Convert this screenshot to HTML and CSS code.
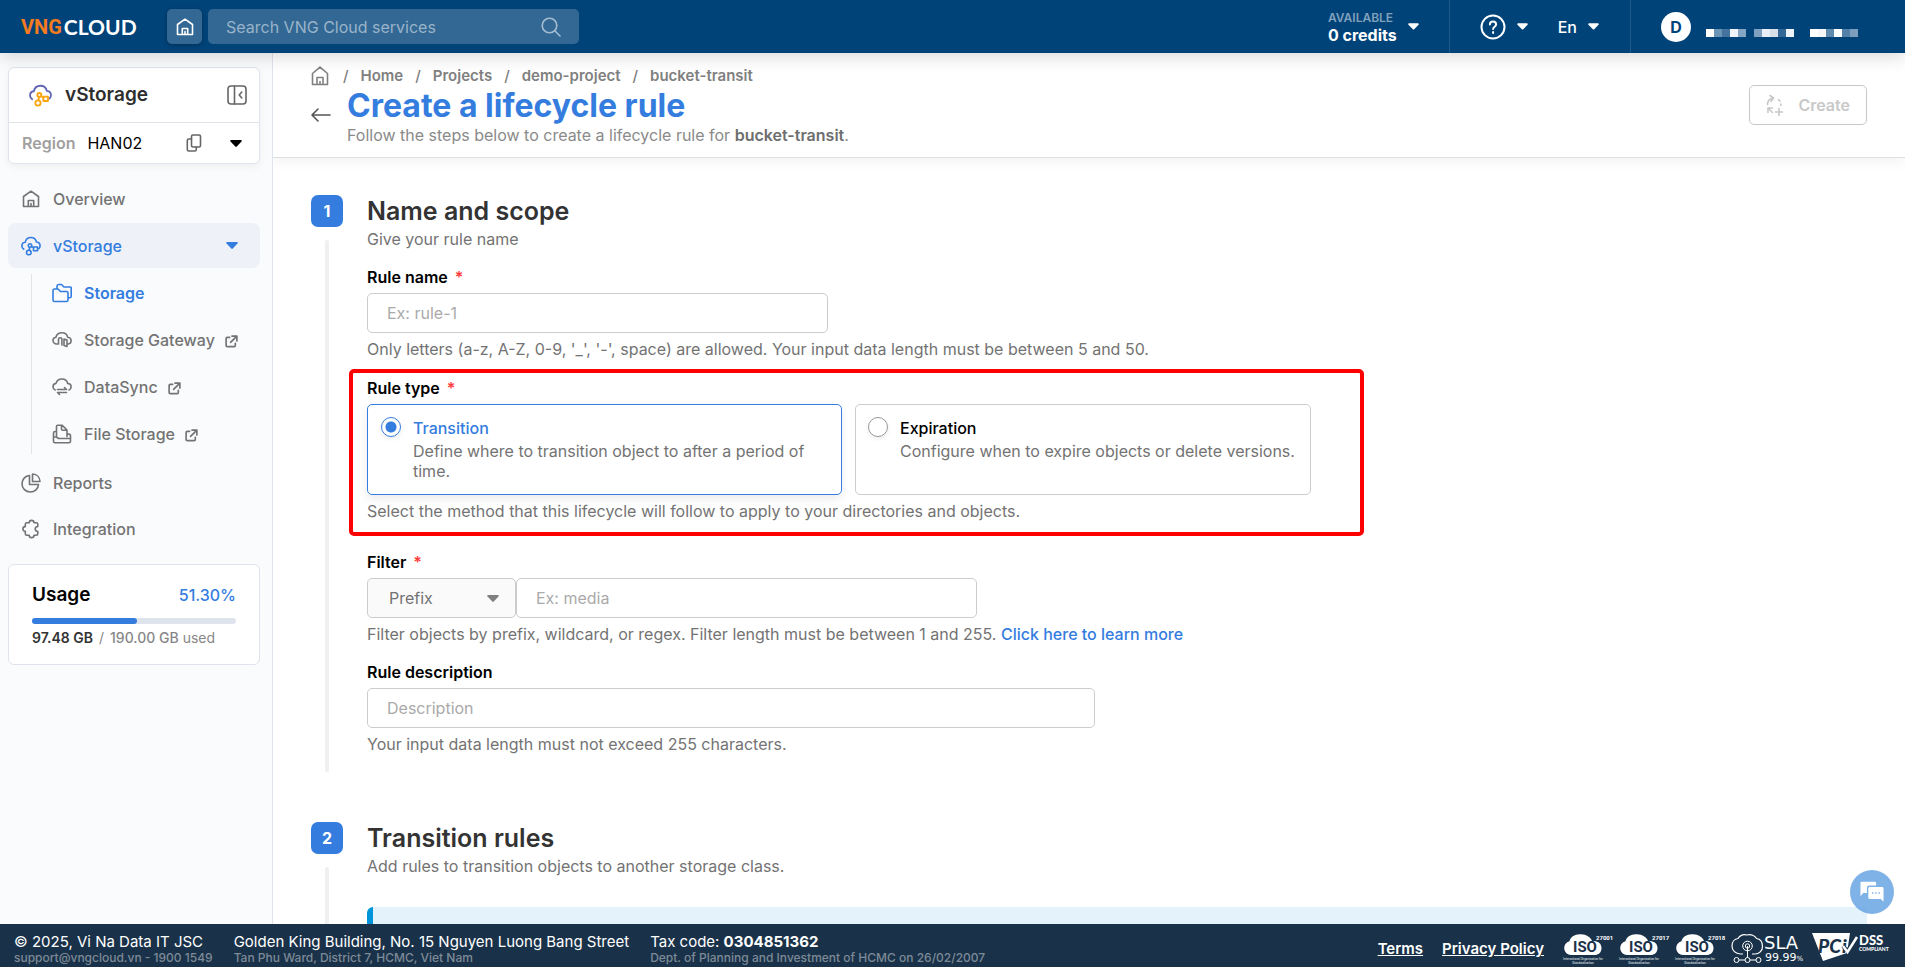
FILE: index.html
```html
<!DOCTYPE html>
<html lang="en">
<head>
<meta charset="utf-8">
<meta name="viewport" content="width=device-width, initial-scale=1">
<title>Create a lifecycle rule - vStorage</title>
<link rel="stylesheet" href="styles.css">
</head>
<body>
<svg class="defs" width="0" height="0" aria-hidden="true">
  <symbol id="i-home" viewBox="0 0 18 18"><path d="M1.500 16.500V6.500L9 1.200l7.500 5.300v10H1.500zM6.300 16.500v-6h5.400v6M9 16.500v-3"/></symbol>
  <symbol id="i-caret" viewBox="0 0 12 7"><path d="M1.200 0h9.600c.9 0 1.300 1 .7 1.600L6.800 6.600c-.4.4-1.100.4-1.500 0L.5 1.600C-.1 1 .3 0 1.200 0z"/></symbol>
  <symbol id="i-cloud" viewBox="0 0 20 20"><path d="M2.800 13.200C1.500 12.400.9 11.300.9 10c0-2 1.400-3.500 3.300-3.700C4.800 3.500 7 1.500 9.900 1.500c2.800 0 5 1.900 5.600 4.500 2.100.2 3.600 1.800 3.600 3.800 0 1.200-.5 2.200-1.300 2.900"/></symbol>
  <symbol id="i-nodes" viewBox="0 0 20 20"><circle cx="9" cy="9.500" r="1.700"/><circle cx="7.800" cy="16.500" r="2.300"/><rect x="12.500" y="11" width="4" height="3.800"/><path d="M8.700 11.500l-.4 2.500M10.600 10.600l1.900 1"/></symbol>
  <symbol id="i-ext" viewBox="0 0 14 14"><path d="M5 2.500H2.500c-.8 0-1.300.5-1.300 1.300v7.400c0 .8.500 1.300 1.300 1.300h7.300c.8 0 1.300-.5 1.300-1.300V9M7.500 1.200h5.300v5.300M12.500 1.500L6 8"/></symbol>
</svg>

<header class="topbar">
  <a class="logo" href="#"><span class="logo-vng">VNG</span><span>CLOUD</span></a>
  <button class="home-btn" type="button" aria-label="Home"><svg class="ico" width="18" height="18"><use href="#i-home"/></svg></button>
  <div class="search">
    <input type="search" placeholder="Search VNG Cloud services" aria-label="Search VNG Cloud services">
    <svg class="ico" width="20" height="20" viewBox="0 0 20 20"><circle cx="8.500" cy="8.500" r="7.300"/><path d="M13.800 13.800L19 19"/></svg>
  </div>
  <div class="top-right">
    <button class="credits" type="button">
      <span class="credits-text"><small>AVAILABLE</small><b>0 credits</b></span>
      <svg class="caret" width="11" height="7"><use href="#i-caret"/></svg>
    </button>
    <div class="lang-group">
      <button type="button" aria-label="Help">
        <svg class="ico help" width="26" height="26" viewBox="0 0 26 26"><circle cx="13" cy="13" r="11.500"/><path d="M9.900 10.600c0-1.800 1.300-3 3.100-3s3.100 1.100 3.100 2.800c0 2.300-3 2.300-3 4.600M13.100 18v1"/></svg>
        <svg class="caret" width="11" height="7"><use href="#i-caret"/></svg>
      </button>
      <button type="button">En <svg class="caret" width="11" height="7"><use href="#i-caret"/></svg></button>
    </div>
    <div class="account">
      <span class="avatar">D</span>
      <svg class="masked" width="152" height="8" viewBox="0 0 152 8" shape-rendering="crispEdges">
        <path fill="#fff" d="M0 0h8v8H0z"/><path fill="#6b93b4" d="M8 0h8v8H8z"/><path fill="#44739d" d="M16 0h8v8h-8z"/><path fill="#f0f4f9" d="M24 0h8v8h-8z"/><path fill="#84a6c2" d="M32 0h8v8h-8z"/>
        <path fill="#7fa0be" d="M48 0h8v8h-8z"/><path fill="#eaeff5" d="M56 0h8v8h-8z"/><path fill="#d7e0e9" d="M64 0h8v8h-8z"/><path fill="#336896" d="M72 0h8v8h-8z"/><path fill="#f0f4f9" d="M80 0h8v8h-8z"/>
        <path fill="#fff" d="M104 0h8v8h-8z"/><path fill="#f4f6fa" d="M112 0h8v8h-8z"/><path fill="#6089ae" d="M120 0h8v8h-8z"/><path fill="#fff" d="M128 0h8v8h-8z"/><path fill="#5580a8" d="M136 0h8v8h-8z"/><path fill="#7c9fbe" d="M144 0h8v8h-8z"/>
      </svg>
    </div>
  </div>
</header>

<div class="shell">
  <aside class="sidebar">
    <section class="product">
      <div class="product-head">
        <svg class="ico product-logo" width="23" height="23" viewBox="0 0 20 20"><use class="cloud" href="#i-cloud" width="20" height="20"/><use class="nodes" href="#i-nodes" width="20" height="20"/></svg>
        <span class="product-name">vStorage</span>
        <button type="button" aria-label="Collapse menu"><svg class="ico" width="20" height="20" viewBox="0 0 20 20"><rect x="1" y="1" width="18" height="18" rx="3"/><path d="M7.500 1v18M14.800 7l-2.600 3 2.600 3"/></svg></button>
      </div>
      <div class="region">
        <span class="region-label">Region</span><span>HAN02</span>
        <button type="button" aria-label="Copy region"><svg class="ico" width="16" height="18" viewBox="0 0 16 18"><rect x="5.500" y="1" width="9" height="12" rx="1.500"/><path d="M5.500 5H2.800C1.900 5 1.300 5.600 1.300 6.500v9c0 .9.600 1.500 1.500 1.500h6c.9 0 1.500-.6 1.500-1.500V13"/></svg></button>
        <button type="button" aria-label="Change region"><svg class="caret" width="12" height="7"><use href="#i-caret"/></svg></button>
      </div>
    </section>

    <nav class="menu">
      <a href="#"><svg class="ico" width="20" height="18"><use href="#i-home"/></svg>Overview</a>
      <a class="open" href="#"><svg class="ico" width="20" height="20" viewBox="0 0 20 20"><use href="#i-cloud" width="20" height="20"/><use href="#i-nodes" width="20" height="20"/></svg>vStorage<svg class="caret" width="12" height="7"><use href="#i-caret"/></svg></a>
      <div class="submenu">
        <a class="active" href="#"><svg class="ico" width="20" height="20" viewBox="0 0 20 20"><path d="M5 6V3.200C5 2.300 5.600 1.500 6.500 1.500h3L12 4h6.500c.4 0 .7.300.7.700v8.500c0 .8-.7 1.500-1.500 1.500H16M1 7.500C1 6.700 1.700 6 2.500 6H6l2.500 2.500h6c.8 0 1.500.7 1.500 1.500v7c0 .8-.7 1.500-1.500 1.500h-12C1.700 18.500 1 17.800 1 17z"/></svg>Storage</a>
        <a href="#"><svg class="ico" width="20" height="20" viewBox="0 0 20 20"><path d="M6.500 14H4.700C2.600 14 1 12.500 1 10.600c0-1.700 1.200-3.100 2.900-3.300C4.600 4.500 7 2.800 9.900 2.800c2.800 0 5.200 1.800 5.700 4.400 2 .2 3.500 1.700 3.500 3.500 0 1.700-1.200 3-2.800 3.300M6.500 14V9.500c0-1 .7-1.700 1.700-1.700s1.700.7 1.700 1.700v5.500M12 9l3 1v6.500l-3-1z"/></svg>Storage Gateway<svg class="ico ext" width="13" height="13"><use href="#i-ext"/></svg></a>
        <a href="#"><svg class="ico" width="20" height="20" viewBox="0 0 20 20"><path d="M3.200 13C1.800 12.500 1 11.200 1 9.800c0-1.800 1.300-3.200 3-3.400C4.700 3.800 7 2 9.900 2c2.800 0 5.200 1.800 5.700 4.400 2 .2 3.500 1.700 3.500 3.500 0 1.400-.8 2.600-2.100 3.100M5.500 12.500h9l-2-2M14.500 15.500h-9l2 2"/></svg>DataSync<svg class="ico ext" width="13" height="13"><use href="#i-ext"/></svg></a>
        <a href="#"><svg class="ico" width="20" height="20" viewBox="0 0 20 20"><path d="M4.500 12V2.500c0-.8.500-1.300 1.300-1.300H10l5 4.800v6.500M9.500 1.500V5c0 .8.500 1.300 1.300 1.300H15M4.500 7.500H3.200c-1 0-1.700.6-1.700 1.600v8.200c0 .9.600 1.500 1.500 1.500h14c.9 0 1.500-.6 1.500-1.500v-5.500c0-1-.7-1.700-1.700-1.700H15M1.500 13h3l2 1.500h12"/></svg>File Storage<svg class="ico ext" width="13" height="13"><use href="#i-ext"/></svg></a>
      </div>
      <a href="#"><svg class="ico" width="20" height="20" viewBox="0 0 20 20"><path d="M8.500 2.500v9h9c-.3 4.300-3.700 7.500-8.200 7.500C4.700 19 1 15.500 1 10.800c0-4.400 3.200-8 7.500-8.300zM11.500 1c4.300.2 7.300 3.200 7.500 7.500h-7.500z"/></svg>Reports</a>
      <a href="#"><svg class="ico" width="20" height="20" viewBox="0 0 20 20"><path d="M8.200 3.800a2.400 2.400 0 0 1 4.800 0h2.300c.9 0 1.500.6 1.500 1.500v2.200c-1.600.2-2.600 1.100-2.600 2.500s1 2.300 2.600 2.500v2.200c0 .9-.6 1.500-1.500 1.500H13a2.400 2.400 0 0 1-4.800 0H5.800c-.9 0-1.500-.6-1.500-1.500v-2.300a2.400 2.400 0 0 1 0-4.800V5.300c0-.9.600-1.500 1.500-1.500z"/></svg>Integration</a>
    </nav>

    <section class="usage">
      <div class="usage-head"><h2>Usage</h2><span>51.30%</span></div>
      <div class="bar" role="progressbar" aria-valuenow="51.3" aria-valuemin="0" aria-valuemax="100" aria-label="Usage"><div class="bar-fill" style="width:51.3%"></div></div>
      <p><b class="dark">97.48 GB</b><span class="slash">/</span><b>190.00 GB</b> used</p>
    </section>
  </aside>

  <main class="main">
    <div class="page-head">
      <nav class="crumbs" aria-label="Breadcrumb">
        <a href="#" aria-label="Dashboard"><svg class="ico" width="18" height="20" viewBox="0 0 18 20"><path d="M1.500 18.500V7.500L9 1.200l7.500 6.300v11H1.500zM6 18.500v-7h6v7M9 18.500v-3"/></svg></a><i>/</i>
        <a href="#">Home</a><i>/</i><a href="#">Projects</a><i>/</i><a href="#">demo-project</a><i>/</i><a href="#">bucket-transit</a>
      </nav>
      <div class="title-row">
        <button class="back" type="button" aria-label="Back"><svg class="ico" width="20" height="14" viewBox="0 0 20 14"><path d="M7 1L1 7l6 6M1 7h18"/></svg></button>
        <div>
          <h1>Create a lifecycle rule</h1>
          <p>Follow the steps below to create a lifecycle rule for <b>bucket-transit</b>.</p>
        </div>
      </div>
      <button class="create" type="button" disabled>
        <svg class="ico" width="18" height="22" viewBox="0 0 18 22"><path d="M1.500 10.500c0-2.800 1.500-5 4-6M4 1.500l3.500 2.500L5 7.500M12.500 5.500L14 7.200M14.800 10v1.500M2 18.500V14h4.500M2 14l4.500 4.500M13 14.500v7M9.500 18h7"/></svg>Create
      </button>
    </div>

    <form class="steps">
      <section class="step">
        <div class="rail"><span class="num">1</span><span class="line"></span></div>
        <div class="step-body">
          <h2>Name and scope</h2>
          <p class="step-sub">Give your rule name</p>

          <div class="field">
            <label class="label" for="rule-name">Rule name <em>*</em></label>
            <input class="box w-md" id="rule-name" type="text" placeholder="Ex: rule-1">
            <p class="hint">Only letters (a-z, A-Z, 0-9, '_', '-', space) are allowed. Your input data length must be between 5 and 50.</p>
          </div>

          <div class="field marked" role="radiogroup" aria-labelledby="rule-type">
            <span class="label" id="rule-type">Rule type <em>*</em></span>
            <div class="options">
              <label class="option"><input type="radio" name="type" checked><span><strong>Transition</strong><span class="desc">Define where to transition object to after a period of time.</span></span></label>
              <label class="option"><input type="radio" name="type"><span><strong>Expiration</strong><span class="desc">Configure when to expire objects or delete versions.</span></span></label>
            </div>
            <p class="hint">Select the method that this lifecycle will follow to apply to your directories and objects.</p>
            <div class="marker"></div>
          </div>

          <div class="field">
            <label class="label" for="filter">Filter <em>*</em></label>
            <div class="filter">
              <div class="select">
                <select class="box" aria-label="Filter type"><option>Prefix</option><option>Wildcard</option><option>Regex</option></select>
                <svg class="caret" width="12" height="7"><use href="#i-caret"/></svg>
              </div>
              <input class="box w-md" id="filter" type="text" placeholder="Ex: media">
            </div>
            <p class="hint">Filter objects by prefix, wildcard, or regex. Filter length must be between 1 and 255. <a href="#">Click here to learn more</a></p>
          </div>

          <div class="field">
            <label class="label" for="desc">Rule description</label>
            <input class="box w-lg" id="desc" type="text" placeholder="Description">
            <p class="hint">Your input data length must not exceed 255 characters.</p>
          </div>
        </div>
      </section>

      <section class="step">
        <div class="rail"><span class="num">2</span><span class="line"></span></div>
        <div class="step-body">
          <h2>Transition rules</h2>
          <p class="step-sub">Add rules to transition objects to another storage class.</p>
          <div class="alert"></div>
        </div>
      </section>
    </form>
    <button class="chat" type="button" aria-label="Chat">
      <svg width="24" height="22" viewBox="0 0 26 22"><path fill="#fff" d="M2 0h14c.9 0 1.500.6 1.500 1.500V4H10C8.300 4 7.500 5 7.500 6.500V12H3.500L.5 15.500v-14C.5.600 1.100 0 2 0z"/><path fill="#fff" d="M10.500 5.500H24c.9 0 1.500.6 1.500 1.500v14.500L22.500 18.500h-12C9.600 18.500 9 17.900 9 17V7c0-.9.600-1.500 1.500-1.500z"/><path fill="#7db0e6" d="M13 11.300h1.500v1.500H13zM16.500 11.300H18v1.500h-1.500zM20 11.300h1.500v1.500H20z"/></svg>
    </button>
  </main>
</div>

<footer class="footer">
  <div><p>© 2025, Vi Na Data IT JSC</p><small>support@vngcloud.vn - 1900 1549</small></div>
  <div><p>Golden King Building, No. 15 Nguyen Luong Bang Street</p><small>Tan Phu Ward, District 7, HCMC, Viet Nam</small></div>
  <div><p>Tax code: <b>0304851362</b></p><small>Dept. of Planning and Investment of HCMC on 26/02/2007</small></div>
  <div class="foot-right">
    <a href="#">Terms</a>
    <a href="#">Privacy Policy</a>
    <div class="badges">
      <svg width="50" height="32" viewBox="0 0 50 32"><path fill="#fff" d="M8 22a7 7 0 0 1-1.500-13.800C7.500 4 11.500 1 18 1.300c5.500.2 9.500 2.700 11 6.700 5.500-.3 9.500 2.200 9.500 7 0 4.500-3 7-7 7z"/><text class="iso" x="10" y="19">ISO</text><text class="iso-no" x="33" y="7">27001</text><text class="iso-cap" x="20" y="27">International Organization for</text><text class="iso-cap" x="20" y="31">Standardization</text></svg>
      <svg width="50" height="32" viewBox="0 0 50 32"><path fill="#fff" d="M8 22a7 7 0 0 1-1.500-13.800C7.500 4 11.500 1 18 1.300c5.500.2 9.500 2.700 11 6.700 5.500-.3 9.500 2.200 9.500 7 0 4.500-3 7-7 7z"/><text class="iso" x="10" y="19">ISO</text><text class="iso-no" x="33" y="7">27017</text><text class="iso-cap" x="20" y="27">International Organization for</text><text class="iso-cap" x="20" y="31">Standardization</text></svg>
      <svg width="50" height="32" viewBox="0 0 50 32"><path fill="#fff" d="M8 22a7 7 0 0 1-1.500-13.800C7.500 4 11.500 1 18 1.300c5.500.2 9.500 2.700 11 6.700 5.500-.3 9.500 2.200 9.500 7 0 4.500-3 7-7 7z"/><text class="iso" x="10" y="19">ISO</text><text class="iso-no" x="33" y="7">27018</text><text class="iso-cap" x="20" y="27">International Organization for</text><text class="iso-cap" x="20" y="31">Standardization</text></svg>
      <svg width="74" height="32" viewBox="0 0 74 32"><g fill="none" stroke="#fff"><path stroke-width="1.200" d="M12 21H9.500C4.500 21 1 17.500 1 13c0-4 2.500-7 6-7.500C9 2.500 12.500 1 16 2c4-1 8 .5 9.500 3.500 4 .5 6 4 6 8 0 4.500-3.500 7.500-7.500 7.500h-3"/><circle cx="16.500" cy="13" r="4.800"/><circle cx="16.500" cy="13" r="2.200"/><path d="M16.500 13v11.500M8 27h6M19 27h6"/><circle cx="5.500" cy="27" r="2.500"/><circle cx="16.500" cy="27" r="2.500"/><circle cx="27.500" cy="27" r="2.500"/></g><text class="sla" x="33" y="16">SLA</text><text class="sla-no" x="34" y="28">99.99<tspan font-size="7">%</tspan></text></svg>
      <svg width="76" height="32" viewBox="0 0 76 32"><path fill="#fff" d="M1 0h38l-3 20-24 8z"/><text class="pci" x="7" y="20">PC</text><text class="pci" x="31" y="20">i</text><path fill="none" stroke="#1a3249" stroke-width="4" d="M32 13l4.500 5L46 4"/><path fill="none" stroke="#fff" stroke-width="2.500" d="M32 13l4.500 6L46 4"/><text class="dss" x="48" y="12">DSS</text><text class="dss-cap" x="48" y="18">COMPLIANT</text></svg>
    </div>
  </div>
</footer>
</body>
</html>
```

FILE: styles.css
```css
* { box-sizing: border-box; }
body, h1, h2, p { margin: 0; }
body {
  display: flex;
  flex-direction: column;
  height: 100vh;
  overflow: hidden;
  font: 16px/20px Inter, "Liberation Sans", sans-serif;
  color: #737373;
  background: #fff;
}
a { color: inherit; text-decoration: none; }
button { font: inherit; color: inherit; background: none; border: 0; padding: 0; display: flex; align-items: center; }
input, select { font: inherit; }
.defs { position: absolute; }
.ico { fill: none; stroke: currentColor; stroke-width: 1.6; stroke-linecap: round; stroke-linejoin: round; flex: none; }
.caret { fill: currentColor; flex: none; }

/* top bar */
.topbar {
  display: flex;
  align-items: center;
  flex: none;
  height: 53px;
  padding-left: 21px;
  color: #fff;
  background: #004379;
  box-shadow: 0 4px 16px rgba(0, 0, 0, .15);
  position: relative;
  z-index: 2;
}
.logo { display: flex; align-items: center; gap: 2px; width: 146px; font: 700 21px/28px Lato, sans-serif; }
.logo-vng { color: #f47b20; font: 700 20px/28px Roboto, sans-serif; }
.home-btn { justify-content: center; width: 35px; height: 35px; border-radius: 5px; background: #336894; box-shadow: 0 1px 4px rgba(0, 0, 0, .3); }
.search { display: flex; align-items: center; width: 371px; height: 35px; margin-left: 6px; padding: 0 18px; border-radius: 5px; background: #336894; color: #a5bdd1; }
.search input { flex: 1; min-width: 0; height: 20px; padding: 0; border: 0; outline: 0; background: none; color: #fff; }
.search input::placeholder { color: #99b4c9; opacity: 1; }
.top-right { display: flex; align-self: stretch; margin-left: auto; }
.credits { gap: 11px; padding-right: 30px; text-align: left; }
.credits-text { display: flex; flex-direction: column; }
.credits small { font-size: 12px; line-height: 16px; color: #80a1bc; font-weight: 600; }
.credits b { font-size: 16px; line-height: 18px; font-weight: 700; }
.lang-group { display: flex; gap: 30px; padding: 0 31px 0 30px; border: solid #1f5988; border-width: 0 1px; font-weight: 500; }
.lang-group button { gap: 11px; }
.ico.help { stroke-width: 2; }
.account { display: flex; align-items: center; gap: 15px; padding: 0 47px 0 30px; }
.avatar { display: grid; place-items: center; width: 30px; height: 30px; border-radius: 50%; background: #fff; color: #004379; font-weight: 700; }
.masked { margin-top: 13px; }

/* shell */
.shell { display: flex; flex: 1; min-height: 0; }
.sidebar { flex: none; width: 273px; padding: 14px 12px 0 8px; background: #fafbfd; border-right: 1px solid #dfe3ec; font-weight: 500; }
.product { background: #fff; border: 1px solid #dfe3ec; border-radius: 6px; box-shadow: 0 3px 8px rgba(0, 0, 0, .05); }
.product-head { display: flex; align-items: center; gap: 13px; height: 55px; padding: 0 12px 0 20px; border-bottom: 1px solid #dfe3ec; color: #666; }
.product-logo .cloud { stroke: #6264b5; }
.product-logo .nodes { stroke: #fca510; }
.product-name { flex: 1; font-size: 19px; line-height: 24px; font-weight: 600; color: #2e2e2e; }
.region { display: flex; align-items: center; height: 40px; padding: 0 17px 0 13px; color: #000; font-weight: 400; }
.region-label { margin-right: 12px; color: #a0a0a0; font-weight: 600; }
.region button:first-of-type { margin: 0 28px 0 auto; color: #666; }

.menu { padding-top: 12px; }
.menu a { display: flex; align-items: center; gap: 12px; height: 46px; padding: 0 22px 0 13px; border-radius: 8px; white-space: nowrap; }
.menu .open { height: 45px; margin: 1px 0; background: #eef1f7; color: #347ddf; }
.menu .open .caret { margin-left: auto; }
.submenu { position: relative; padding: 0 0 3px 31px; }
.submenu::before { content: ""; position: absolute; left: 23px; top: 5px; bottom: 6px; width: 1px; background: #e2e4e8; }
.submenu a { height: 47px; padding-right: 0; }
.submenu .active { color: #347ddf; font-weight: 600; }
.ico.ext { margin: 3px 0 0 -2px; stroke-width: 1.8; }

.usage { margin-top: 12px; padding: 18px 23px 17px; background: #fff; border: 1px solid #dfe3ec; border-radius: 6px; color: #878787; }
.usage-head { display: flex; justify-content: space-between; align-items: center; height: 24px; color: #347ddf; }
.usage h2 { font-size: 19px; line-height: 24px; font-weight: 600; color: #000; }
.bar { height: 6px; margin: 11px 0 5px; border-radius: 3px; background: #dfe3ec; }
.bar-fill { height: 100%; border-radius: 3px; background: #347ddf; }
.usage p { font-size: 14px; line-height: 18px; font-weight: 400; }
.usage p b { font-weight: 500; }
.usage p .dark { font-weight: 600; color: #333; }
.slash { margin: 0 6px; }

/* main */
.main { position: relative; flex: 1; min-width: 0; overflow: hidden; }
.page-head { position: relative; padding: 13px 38px 13px; border-bottom: 1px solid #dedfe3; box-shadow: 0 4px 12px rgba(0, 0, 0, .05); color: #8a8a8a; }
.crumbs { display: flex; align-items: center; height: 20px; font-size: 15px; font-weight: 600; color: #808080; }
.crumbs svg { display: block; }
.crumbs i { margin: 0 12px; font-style: normal; font-weight: 500; }
.crumbs a:first-child { margin-right: 2px; }
.title-row { display: flex; align-items: center; gap: 16px; }
.back { color: #555; }
.title-row h1 { font-size: 32px; line-height: 40px; font-weight: 700; color: #347ddf; }
.title-row p { line-height: 18px; }
.title-row b { font-weight: 600; color: #6e6e6e; }
.create { position: absolute; right: 38px; top: 32px; gap: 14px; height: 40px; padding: 0 16px; border: 1px solid #c8c8c8; border-radius: 5px; color: #c8c8c8; font-weight: 600; }

.steps { display: flex; flex-direction: column; gap: 50px; padding: 37px 38px 0; }
.step { display: flex; gap: 24px; }
.rail { display: flex; flex-direction: column; align-items: center; flex: none; gap: 13px; width: 32px; }
.num { display: grid; place-items: center; width: 32px; height: 32px; border-radius: 7px; background: #347ddf; color: #fff; font-weight: 700; }
.line { flex: 1; width: 4px; border-radius: 2px; background: #f0f0f0; }
.step-body { flex: 1; min-width: 0; }
.step-body h2 { font-size: 25px; line-height: 32px; font-weight: 600; color: #333; }
.step-sub { margin-bottom: 16px; line-height: 24px; }
.field { padding-bottom: 18px; }
.field:first-of-type { padding-bottom: 19px; }
.label { display: block; margin-bottom: 6px; font-weight: 600; color: #000; }
.label em { margin-left: 3px; font-style: normal; color: #ff3b3b; }
.hint { margin-top: 6px; }
.hint a { color: #347ddf; font-weight: 500; }
.box { display: block; width: 100%; height: 40px; padding: 0 19px; border: 1px solid #ccc; border-radius: 5px; background: #fff; color: #333; }
.box::placeholder { color: #aaa; opacity: 1; }
.w-md { max-width: 461px; }
.w-lg { max-width: 728px; }

.marked { position: relative; padding-bottom: 31px; }
.marker { position: absolute; left: -18px; top: -9px; bottom: 16px; width: 1015px; border: 4px solid #fe0000; border-radius: 5px; pointer-events: none; }
.options { display: grid; grid-template-columns: 475fr 456fr; gap: 13px; max-width: 944px; }
.option { display: flex; gap: 12px; min-height: 91px; padding: 11px 12px; border: 1px solid #ccc; border-radius: 5px; }
.option:has(:checked) { padding-left: 13px; border-color: #347ddf; box-shadow: 0 4px 10px rgba(0, 0, 0, .08); }
.option strong { display: block; margin-bottom: 1px; font-weight: 500; line-height: 24px; color: #000; }
.option:has(:checked) strong { color: #347ddf; }
.desc { display: block; }
.option input { appearance: none; flex: none; width: 20px; height: 20px; margin: 1px 0 0; border: 1px solid #999; border-radius: 50%; background: #fff; box-shadow: 0 2px 4px rgba(0, 0, 0, .08); }
.option input:checked { border-color: #347ddf; background: radial-gradient(circle, #347ddf 0 5px, #fff 6px); }

.filter { display: flex; }
.select { position: relative; flex: none; width: 149px; color: #808080; }
.select select { appearance: none; padding: 0 21px; background: #fafafa; color: #737373; }
.select .caret { position: absolute; right: 17px; top: 17px; pointer-events: none; }
.alert { height: 120px; margin-top: 29px; border-left: 6px solid #0095da; border-radius: 6px; background: #e4f2fb; }
.chat { position: absolute; right: 11px; bottom: 10px; justify-content: center; width: 44px; height: 44px; border-radius: 50%; background: rgba(84, 152, 223, .75); }

/* footer */
.footer { display: flex; flex: none; gap: 21px; height: 43px; padding: 9px 18px 0 14px; background: #1a3249; color: #fff; font-size: 15px; font-weight: 400; position: relative; z-index: 1; }
.footer p { line-height: 18px; white-space: nowrap; }
.footer b { font-weight: 700; }
.footer small { display: block; font-size: 12px; line-height: 14px; font-weight: 500; color: #7d8a97; white-space: nowrap; }
.foot-right { display: flex; align-items: center; gap: 19px; height: 32px; margin-left: auto; font-weight: 600; }
.foot-right a { text-decoration: underline; }
.badges { display: flex; gap: 6px; }
.badges svg { display: block; overflow: visible; }
.iso { font: 700 15px Roboto, sans-serif; fill: #1a3249; }
.iso-no { font: 700 6px Roboto, sans-serif; fill: #fff; }
.iso-cap { font: 700 3px Roboto, sans-serif; fill: #b8c2cc; text-anchor: middle; }
.sla { font: 400 18px "DejaVu Sans", sans-serif; fill: #fff; }
.sla-no { font: 400 11px "DejaVu Sans", sans-serif; fill: #fff; }
.pci { font: italic 900 19px Lato, sans-serif; fill: #1a3249; }
.dss { font: 900 13px Lato, sans-serif; fill: #fff; }
.dss-cap { font: 900 5px Lato, sans-serif; fill: #fff; }
```
